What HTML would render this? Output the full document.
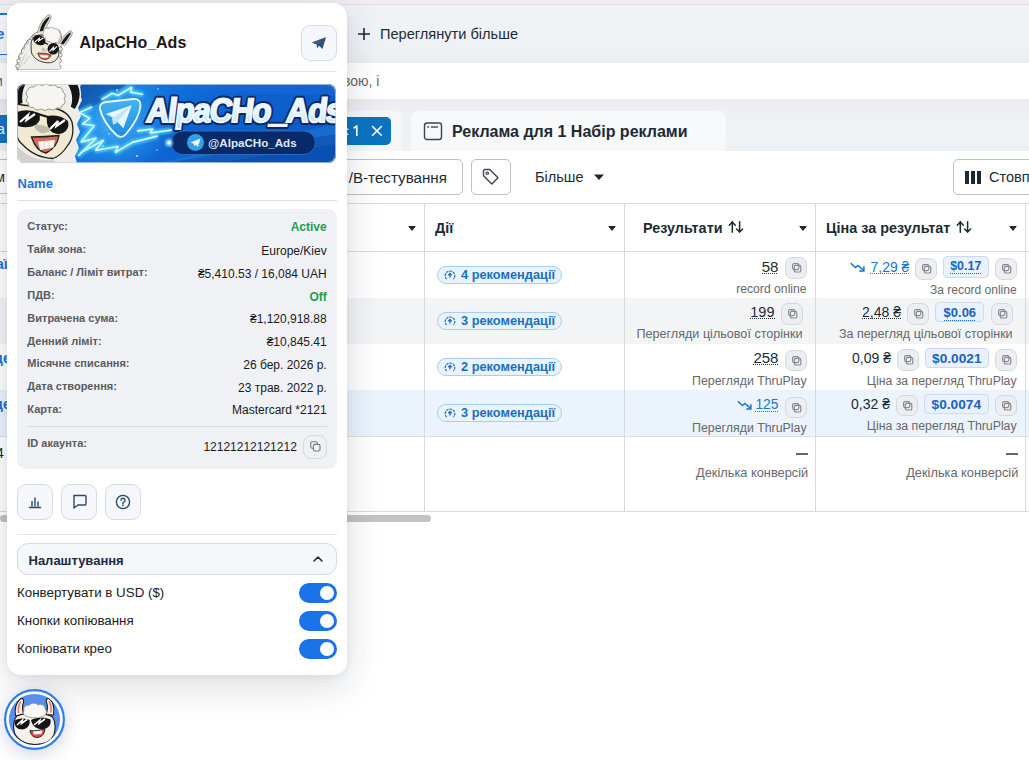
<!DOCTYPE html>
<html><head><meta charset="utf-8">
<style>
html,body{margin:0;padding:0;}
body{width:1029px;height:760px;overflow:hidden;position:relative;background:#fff;font-family:"Liberation Sans",sans-serif;color:#1c2b33;}
.a{position:absolute;}
.t{position:absolute;white-space:nowrap;line-height:1;}
.b{font-weight:700;}
.r{text-align:right;}
.cp{position:absolute;width:19.6px;height:19.6px;border:1px solid #d4d8de;border-radius:7px;background:#eceef2;box-sizing:content-box;}
.cp svg{position:absolute;left:6px;top:5px;}
.pill{position:absolute;height:16px;border:1px solid #a9cdf0;border-radius:9px;background:#e9f3fc;}
.usd{position:absolute;border:1px solid #c9dcf3;border-radius:4px;background:#e8f1fc;}
.sub{color:#65686c;}
.lnk{color:#1877c9;}
.dot{background-image:linear-gradient(to right,currentColor 50%,transparent 50%);background-size:2px 1px;background-repeat:repeat-x;background-position:0 100%;}
</style></head><body>

<!-- ===== PAGE BACKGROUND ===== -->
<div class="a" style="left:0;top:0;width:1029px;height:4px;background:#f1ecf2"></div>
<div class="a" style="left:0;top:4px;width:1029px;height:59px;background:linear-gradient(#eff2f5 0,#eff2f5 75%,#ecedf2 100%)"></div>
<div class="a" style="left:0;top:4px;width:1029px;height:1px;background:#e0e1e6"></div>
<svg class="a" style="left:357px;top:27px" width="14" height="14" viewBox="0 0 14 14"><path d="M7 1V13M1 7H13" stroke="#1c2b33" stroke-width="1.6"/></svg>
<div class="t" style="left:380px;top:27px;font-size:14.6px;color:#1c2b33">Переглянути більше</div>
<div class="a" style="left:0;top:63px;width:1029px;height:36px;background:#fff"></div>
<div class="t" style="left:343px;top:74px;font-size:14px;color:#65686c">вою, і</div>

<div class="a" style="left:0;top:99px;width:1029px;height:52px;background:linear-gradient(#eaebf0 0,#eef1f4 14px,#eff2f5 100%)"></div>
<div class="a" style="left:300px;top:111px;width:102px;height:40px;background:#f5f6f8;border-radius:8px 8px 0 0"></div>
<div class="a" style="left:300px;top:117px;width:91px;height:28px;background:#0b74c0;border-radius:5px"></div>
<svg class="a" style="left:346px;top:124px" width="40" height="14" viewBox="0 0 40 14"><path d="M1.6 4.5v1.6M1.6 9.5v1.6" stroke="#fff" stroke-width="1.6"/><path d="M7.6 4.2L10.8 2V12" fill="none" stroke="#fff" stroke-width="1.7" stroke-linejoin="round"/><path d="M26.6 2.6L35.3 11.3M35.3 2.6L26.6 11.3" stroke="#fff" stroke-width="1.5" stroke-linecap="round"/></svg>

<div class="a" style="left:411px;top:111px;width:315px;height:40px;background:#f7f8fa;border-radius:8px 8px 0 0"></div>
<svg class="a" style="left:423px;top:121px" width="20" height="20" viewBox="0 0 20 20"><rect x="1.5" y="2" width="17" height="16.5" rx="2.5" fill="none" stroke="#3c4650" stroke-width="1.4"/><line x1="5" y1="6" x2="5.6" y2="6" stroke="#3c4650" stroke-width="1.6" stroke-linecap="round"/><line x1="8" y1="6" x2="15" y2="6" stroke="#3c4650" stroke-width="1.4"/></svg>
<div class="t b" style="left:452px;top:124px;font-size:16px;color:#1c2b33">Реклама для 1 Набір реклами</div>

<!-- toolbar -->
<div class="a" style="left:0;top:151px;width:1029px;height:52px;background:#fff"></div>
<div class="a" style="left:280px;top:159px;width:181px;height:34px;border:1px solid #b8c2cc;border-radius:5px;background:#fff"></div>
<div class="t" style="left:348.7px;top:170px;font-size:15.2px;color:#1c2b33">/В-тестування</div>
<div class="a" style="left:471px;top:159px;width:38px;height:34px;border:1px solid #b8c2cc;border-radius:5px;background:#fff"></div>
<svg class="a" style="left:481px;top:167px" width="20" height="20" viewBox="0 0 20 20"><path d="M2.5 3.5v5.2l8.3 8.3 6.2-6.2-8.3-8.3H3.5z" fill="none" stroke="#3c4650" stroke-width="1.4" stroke-linejoin="round"/><circle cx="6.3" cy="6.3" r="1.2" fill="none" stroke="#3c4650" stroke-width="1.2"/></svg>
<div class="t" style="left:535px;top:170px;font-size:14.5px;color:#1c2b33">Більше</div>
<svg class="a" style="left:593px;top:173px" width="12" height="8" viewBox="0 0 12 8"><path d="M1 1.5h10L6 7z" fill="#1c2b33"/></svg>
<div class="a" style="left:953px;top:159px;width:90px;height:34px;border:1px solid #b8c2cc;border-radius:5px;background:#fff"></div>
<svg class="a" style="left:965px;top:171px" width="17" height="13" viewBox="0 0 17 13"><rect x="0" y="0" width="4" height="13" fill="#1c2b33"/><rect x="6" y="0" width="4" height="13" fill="#1c2b33"/><rect x="12" y="0" width="4" height="13" fill="#1c2b33"/></svg>
<div class="t" style="left:989px;top:170px;font-size:14.5px;color:#1c2b33">Стовпці</div>

<!-- table -->
<div class="a" style="left:0;top:203px;width:1029px;height:1px;background:#d8d9db"></div>
<div class="a" style="left:0;top:251px;width:1029px;height:1px;background:#d8d9db"></div>
<div class="a" style="left:0;top:298px;width:1029px;height:46px;background:#f3f4f6"></div>
<div class="a" style="left:0;top:390px;width:1029px;height:46px;background:#ebf3fd"></div>
<div class="a" style="left:0;top:436px;width:1029px;height:1px;background:#dddee0"></div>
<div class="a" style="left:0;top:511px;width:1029px;height:1px;background:#d8d9db"></div>
<div class="a" style="left:424px;top:203px;width:1px;height:308px;background:#d8d9db"></div>
<div class="a" style="left:624px;top:203px;width:1px;height:308px;background:#d8d9db"></div>
<div class="a" style="left:815px;top:203px;width:1px;height:308px;background:#d8d9db"></div>
<div class="a" style="left:1025px;top:203px;width:1px;height:308px;background:#d8d9db"></div>
<div class="a" style="left:0;top:515px;width:431px;height:7px;background:#c3c3c3;border-radius:4px"></div>

<!-- header -->
<svg class="a" style="left:408px;top:226px" width="8" height="5" viewBox="0 0 8 5"><path d="M0.8 0.5h6.4L4 4.4z" fill="#1c2b33" stroke="#1c2b33" stroke-width="1" stroke-linejoin="round"/></svg>
<div class="t b" style="left:435px;top:221px;font-size:14.4px">Дії</div>
<svg class="a" style="left:608px;top:226px" width="8" height="5" viewBox="0 0 8 5"><path d="M0.8 0.5h6.4L4 4.4z" fill="#1c2b33" stroke="#1c2b33" stroke-width="1" stroke-linejoin="round"/></svg>
<div class="t b" style="left:643px;top:221px;font-size:14.4px">Результати</div>
<svg class="a" style="left:728px;top:220px" width="16" height="14" viewBox="0 0 16 14"><path d="M4.3 1.6V12.2M1.3 5.2L4.3 2 7.3 5.2M11.6 1.8V12.3M8.6 9L11.6 12.1 14.6 9" fill="none" stroke="#1c2b33" stroke-width="1.5" stroke-linecap="round" stroke-linejoin="round"/></svg>
<svg class="a" style="left:799px;top:226px" width="8" height="5" viewBox="0 0 8 5"><path d="M0.8 0.5h6.4L4 4.4z" fill="#1c2b33" stroke="#1c2b33" stroke-width="1" stroke-linejoin="round"/></svg>
<div class="t b" style="left:826px;top:221px;font-size:14.4px">Ціна за результат</div>
<svg class="a" style="left:955.5px;top:220px" width="16" height="14" viewBox="0 0 16 14"><path d="M4.3 1.6V12.2M1.3 5.2L4.3 2 7.3 5.2M11.6 1.8V12.3M8.6 9L11.6 12.1 14.6 9" fill="none" stroke="#1c2b33" stroke-width="1.5" stroke-linecap="round" stroke-linejoin="round"/></svg>
<svg class="a" style="left:1009px;top:226px" width="8" height="5" viewBox="0 0 8 5"><path d="M0.8 0.5h6.4L4 4.4z" fill="#1c2b33" stroke="#1c2b33" stroke-width="1" stroke-linejoin="round"/></svg>

<!--STRIP-->
<div class="a" style="left:0;top:13px;width:7px;height:41px;background:#f7f8fa"></div>
<div class="a" style="left:0;top:13px;width:7px;height:1.5px;background:#1a73e8"></div>
<div class="a" style="left:0;top:53.5px;width:7px;height:1.5px;background:#1a73e8"></div>
<div class="t b" style="left:-4px;top:26px;font-size:15px;color:#1a6fd0">е</div>
<div class="t" style="left:-5px;top:74px;font-size:14px;color:#65686c">и</div>
<div class="a" style="left:0;top:115px;width:7px;height:28px;background:#1672c4"></div>
<div class="t" style="left:-3px;top:122px;font-size:14px;color:#fff">а</div>
<div class="a" style="left:0;top:159px;width:7px;height:1px;background:#b8c2cc"></div>
<div class="a" style="left:0;top:193px;width:7px;height:1px;background:#b8c2cc"></div>
<div class="t" style="left:-5px;top:170px;font-size:14.5px;color:#1c2b33">м</div>
<div class="t b" style="left:-4px;top:257px;font-size:14px;color:#1a6fd0">аї</div>
<div class="t b" style="left:-6px;top:351px;font-size:14px;color:#1a6fd0">де</div>
<div class="t b" style="left:-6px;top:397px;font-size:14px;color:#1a6fd0">де</div>
<div class="t" style="left:-4px;top:446px;font-size:14px;color:#1c2b33">4</div>
<!--/STRIP-->
<!--ROWS-->
<div class="pill" style="left:437px;top:266.0px;width:123px"><svg class="a" style="left:6px;top:3px" width="12" height="11" viewBox="0 0 12 11"><path d="M2.6 9.2A4.8 4.8 0 1 1 9.4 9.2" fill="none" stroke="#1d6fbe" stroke-width="1.2" stroke-dasharray="2.6 0.9"/><path d="M6 7.6V3.6M4.2 5.3L6 3.5 7.8 5.3" fill="none" stroke="#1d6fbe" stroke-width="1.3"/></svg><div class="t b" style="left:23px;top:1.6px;font-size:12.8px;color:#1b6fbf">4 рекомендації</div></div>
<div class="t dot" style="right:250.6px;top:258.6px;font-size:15px;color:#1c2b33">58</div>
<div class="cp" style="left:785.0px;top:257.0px"><svg width="10" height="10" viewBox="0 0 10 10"><rect x="0.6" y="0.6" width="6.2" height="6.0" rx="1.5" fill="none" stroke="#85898f" stroke-width="1.15"/><rect x="2.3" y="2.4" width="6.5" height="6.6" rx="1.6" fill="none" stroke="#85898f" stroke-width="1.15"/></svg></div>
<div class="t" style="right:222.4px;top:282.5px;font-size:12.2px;color:#65686c">record online</div>
<div class="t dot" style="right:119.6px;top:259.7px;font-size:14px;color:#1877c9">7,29 ₴</div>
<svg class="a" style="left:850px;top:262px" width="15" height="10" viewBox="0 0 15 10"><path d="M0.8 1.2l4.6 4.4 2.6-2.2 5.6 5" fill="none" stroke="#1877c9" stroke-width="1.5"/><path d="M9.2 8.9h4.7V4.2" fill="none" stroke="#1877c9" stroke-width="1.5"/></svg>
<div class="cp" style="left:915.0px;top:258.0px"><svg width="10" height="10" viewBox="0 0 10 10"><rect x="0.6" y="0.6" width="6.2" height="6.0" rx="1.5" fill="none" stroke="#85898f" stroke-width="1.15"/><rect x="2.3" y="2.4" width="6.5" height="6.6" rx="1.6" fill="none" stroke="#85898f" stroke-width="1.15"/></svg></div>
<div class="usd" style="left:943.0px;top:256.0px;width:43.6px;height:19.8px"></div>
<div class="t b" style="left:943.0px;width:45.6px;text-align:center;top:259.8px;font-size:12.5px;color:#1a62c5"><span class="dot" style="padding-bottom:1.5px">$0.17</span></div>
<div class="cp" style="left:995.0px;top:258.0px"><svg width="10" height="10" viewBox="0 0 10 10"><rect x="0.6" y="0.6" width="6.2" height="6.0" rx="1.5" fill="none" stroke="#85898f" stroke-width="1.15"/><rect x="2.3" y="2.4" width="6.5" height="6.6" rx="1.6" fill="none" stroke="#85898f" stroke-width="1.15"/></svg></div>
<div class="t" style="right:12.4px;top:283.5px;font-size:12.0px;color:#65686c">За record online</div>
<div class="pill" style="left:437px;top:312.3px;width:123px"><svg class="a" style="left:6px;top:3px" width="12" height="11" viewBox="0 0 12 11"><path d="M2.6 9.2A4.8 4.8 0 1 1 9.4 9.2" fill="none" stroke="#1d6fbe" stroke-width="1.2" stroke-dasharray="2.6 0.9"/><path d="M6 7.6V3.6M4.2 5.3L6 3.5 7.8 5.3" fill="none" stroke="#1d6fbe" stroke-width="1.3"/></svg><div class="t b" style="left:23px;top:1.6px;font-size:12.8px;color:#1b6fbf">3 рекомендації</div></div>
<div class="t dot" style="right:254.5px;top:304.6px;font-size:14.5px;color:#1c2b33">199</div>
<div class="cp" style="left:781.0px;top:303.0px"><svg width="10" height="10" viewBox="0 0 10 10"><rect x="0.6" y="0.6" width="6.2" height="6.0" rx="1.5" fill="none" stroke="#85898f" stroke-width="1.15"/><rect x="2.3" y="2.4" width="6.5" height="6.6" rx="1.6" fill="none" stroke="#85898f" stroke-width="1.15"/></svg></div>
<div class="t" style="right:226.4px;top:328.3px;font-size:12.6px;color:#65686c">Перегляди цільової сторінки</div>
<div class="t dot" style="right:128.0px;top:304.9px;font-size:14px;color:#1c2b33">2,48 ₴</div>
<div class="cp" style="left:907.3px;top:303.2px"><svg width="10" height="10" viewBox="0 0 10 10"><rect x="0.6" y="0.6" width="6.2" height="6.0" rx="1.5" fill="none" stroke="#85898f" stroke-width="1.15"/><rect x="2.3" y="2.4" width="6.5" height="6.6" rx="1.6" fill="none" stroke="#85898f" stroke-width="1.15"/></svg></div>
<div class="usd" style="left:935.2px;top:301.8px;width:47.3px;height:18.7px"></div>
<div class="t b" style="left:935.2px;width:49.3px;text-align:center;top:305.6px;font-size:13px;color:#1a62c5"><span class="dot" style="padding-bottom:1.5px">$0.06</span></div>
<div class="cp" style="left:991.2px;top:303.2px"><svg width="10" height="10" viewBox="0 0 10 10"><rect x="0.6" y="0.6" width="6.2" height="6.0" rx="1.5" fill="none" stroke="#85898f" stroke-width="1.15"/><rect x="2.3" y="2.4" width="6.5" height="6.6" rx="1.6" fill="none" stroke="#85898f" stroke-width="1.15"/></svg></div>
<div class="t" style="right:16.4px;top:328.3px;font-size:12.5px;color:#65686c">За перегляд цільової сторінки</div>
<div class="pill" style="left:437px;top:358.1px;width:123px"><svg class="a" style="left:6px;top:3px" width="12" height="11" viewBox="0 0 12 11"><path d="M2.6 9.2A4.8 4.8 0 1 1 9.4 9.2" fill="none" stroke="#1d6fbe" stroke-width="1.2" stroke-dasharray="2.6 0.9"/><path d="M6 7.6V3.6M4.2 5.3L6 3.5 7.8 5.3" fill="none" stroke="#1d6fbe" stroke-width="1.3"/></svg><div class="t b" style="left:23px;top:1.6px;font-size:12.8px;color:#1b6fbf">2 рекомендації</div></div>
<div class="t dot" style="right:250.6px;top:350.1px;font-size:15px;color:#1c2b33">258</div>
<div class="cp" style="left:785.0px;top:349.5px"><svg width="10" height="10" viewBox="0 0 10 10"><rect x="0.6" y="0.6" width="6.2" height="6.0" rx="1.5" fill="none" stroke="#85898f" stroke-width="1.15"/><rect x="2.3" y="2.4" width="6.5" height="6.6" rx="1.6" fill="none" stroke="#85898f" stroke-width="1.15"/></svg></div>
<div class="t" style="right:222.4px;top:375.0px;font-size:12.35px;color:#65686c">Перегляди ThruPlay</div>
<div class="t" style="right:138.0px;top:350.8px;font-size:14px;color:#1c2b33">0,09 ₴</div>
<div class="cp" style="left:897.2px;top:349.1px"><svg width="10" height="10" viewBox="0 0 10 10"><rect x="0.6" y="0.6" width="6.2" height="6.0" rx="1.5" fill="none" stroke="#85898f" stroke-width="1.15"/><rect x="2.3" y="2.4" width="6.5" height="6.6" rx="1.6" fill="none" stroke="#85898f" stroke-width="1.15"/></svg></div>
<div class="usd" style="left:925.0px;top:348.1px;width:61.6px;height:18.3px"></div>
<div class="t b" style="left:925.0px;width:63.6px;text-align:center;top:351.9px;font-size:13.7px;color:#1a62c5"><span class="" style="padding-bottom:1.5px">$0.0021</span></div>
<div class="cp" style="left:995.0px;top:349.1px"><svg width="10" height="10" viewBox="0 0 10 10"><rect x="0.6" y="0.6" width="6.2" height="6.0" rx="1.5" fill="none" stroke="#85898f" stroke-width="1.15"/><rect x="2.3" y="2.4" width="6.5" height="6.6" rx="1.6" fill="none" stroke="#85898f" stroke-width="1.15"/></svg></div>
<div class="t" style="right:12.4px;top:374.6px;font-size:12.3px;color:#65686c">Ціна за перегляд ThruPlay</div>
<div class="pill" style="left:437px;top:404.3px;width:123px"><svg class="a" style="left:6px;top:3px" width="12" height="11" viewBox="0 0 12 11"><path d="M2.6 9.2A4.8 4.8 0 1 1 9.4 9.2" fill="none" stroke="#1d6fbe" stroke-width="1.2" stroke-dasharray="2.6 0.9"/><path d="M6 7.6V3.6M4.2 5.3L6 3.5 7.8 5.3" fill="none" stroke="#1d6fbe" stroke-width="1.3"/></svg><div class="t b" style="left:23px;top:1.6px;font-size:12.8px;color:#1b6fbf">3 рекомендації</div></div>
<div class="t dot" style="right:250.6px;top:398.4px;font-size:13.8px;color:#1877c9">125</div>
<svg class="a" style="left:736.5px;top:400px" width="15" height="10" viewBox="0 0 15 10"><path d="M0.8 1.2l4.6 4.4 2.6-2.2 5.6 5" fill="none" stroke="#1877c9" stroke-width="1.5"/><path d="M9.2 8.9h4.7V4.2" fill="none" stroke="#1877c9" stroke-width="1.5"/></svg>
<div class="cp" style="left:785.0px;top:396.7px"><svg width="10" height="10" viewBox="0 0 10 10"><rect x="0.6" y="0.6" width="6.2" height="6.0" rx="1.5" fill="none" stroke="#85898f" stroke-width="1.15"/><rect x="2.3" y="2.4" width="6.5" height="6.6" rx="1.6" fill="none" stroke="#85898f" stroke-width="1.15"/></svg></div>
<div class="t" style="right:222.4px;top:422.0px;font-size:12.35px;color:#65686c">Перегляди ThruPlay</div>
<div class="t" style="right:139.0px;top:396.5px;font-size:14px;color:#1c2b33">0,32 ₴</div>
<div class="cp" style="left:896.2px;top:394.8px"><svg width="10" height="10" viewBox="0 0 10 10"><rect x="0.6" y="0.6" width="6.2" height="6.0" rx="1.5" fill="none" stroke="#85898f" stroke-width="1.15"/><rect x="2.3" y="2.4" width="6.5" height="6.6" rx="1.6" fill="none" stroke="#85898f" stroke-width="1.15"/></svg></div>
<div class="usd" style="left:924.0px;top:393.8px;width:62.6px;height:18.7px"></div>
<div class="t b" style="left:924.0px;width:64.6px;text-align:center;top:397.6px;font-size:13.7px;color:#1a62c5"><span class="" style="padding-bottom:1.5px">$0.0074</span></div>
<div class="cp" style="left:995.0px;top:394.8px"><svg width="10" height="10" viewBox="0 0 10 10"><rect x="0.6" y="0.6" width="6.2" height="6.0" rx="1.5" fill="none" stroke="#85898f" stroke-width="1.15"/><rect x="2.3" y="2.4" width="6.5" height="6.6" rx="1.6" fill="none" stroke="#85898f" stroke-width="1.15"/></svg></div>
<div class="t" style="right:12.4px;top:420.3px;font-size:12.3px;color:#65686c">Ціна за перегляд ThruPlay</div>
<div class="a" style="left:796px;top:453px;width:12.3px;height:1.6px;background:#65686c"></div>
<div class="t" style="right:220.8px;top:466.5px;font-size:12.8px;color:#65686c">Декілька конверсій</div>
<div class="a" style="left:1006px;top:453px;width:12.3px;height:1.6px;background:#65686c"></div>
<div class="t" style="right:10.7px;top:466.5px;font-size:12.8px;color:#65686c">Декілька конверсій</div>
<!--/ROWS-->

<!--PANEL-->
<!-- panel shadow & body -->
<div class="a" style="left:7px;top:3px;width:340px;height:672px;background:#fff;border-radius:14px;box-shadow:0 10px 36px rgba(20,30,50,0.16),0 2px 6px rgba(20,30,50,0.06)"></div>

<!-- header llama -->
<svg class="a" style="left:14px;top:12px" width="60" height="60" viewBox="0 0 60 60">
 <path d="M3 57.5 C2 53 4 50 5 47 C4 44 7 42 8 39 C8 36 11 34 12 31 C13 28 16 27 18 24 C20 21 24 20 27 18 L34 16 L45 18 C49 24 47.5 30 47 35 C48 40 45 44 46 48 C45 52 44 55 44 57.5 Z" fill="#efedea" stroke="#4a4844" stroke-width="0.6"/>
<circle cx="3.6" cy="54" r="2" fill="#efedea" stroke="#4a4844" stroke-width="0.5"/><circle cx="4.6" cy="49" r="2" fill="#efedea" stroke="#4a4844" stroke-width="0.5"/><circle cx="7" cy="44" r="2.2" fill="#efedea" stroke="#4a4844" stroke-width="0.5"/><circle cx="9.5" cy="39" r="2.2" fill="#efedea" stroke="#4a4844" stroke-width="0.5"/><circle cx="12.5" cy="34" r="2.2" fill="#efedea" stroke="#4a4844" stroke-width="0.5"/><circle cx="16" cy="29.5" r="2.2" fill="#efedea" stroke="#4a4844" stroke-width="0.5"/><circle cx="20" cy="25" r="2" fill="#efedea" stroke="#4a4844" stroke-width="0.5"/><circle cx="46.5" cy="37" r="2" fill="#efedea" stroke="#4a4844" stroke-width="0.5"/><circle cx="46" cy="43" r="2" fill="#efedea" stroke="#4a4844" stroke-width="0.5"/><circle cx="45.5" cy="49" r="2" fill="#efedea" stroke="#4a4844" stroke-width="0.5"/><circle cx="45" cy="55" r="2" fill="#efedea" stroke="#4a4844" stroke-width="0.5"/><path d="M5 57.5 L7 44 L13 33 L21 24 L30 18 L45 18 L45.5 57.5Z" fill="#efedea"/>
 <path d="M6 55 C9 50 8 46 12 42 M10 52 C12 49 13 46 16 44" fill="none" stroke="#b5b2ac" stroke-width="0.6"/>
 <path d="M24.5 20.5 C26 13 30 6.5 34.5 4 C36.5 3.5 36.8 5.5 35.5 7.5 C33 11 31 15 29.5 19.5 Z" fill="#1a1a1a" stroke="#dcd8d0" stroke-width="1.6" stroke-linejoin="round"/>
 <path d="M23.3 21 C25 13 29.5 5.5 34.5 3 C37.8 2.5 37.5 6 36.3 8 C34 11.5 32 15.5 30.5 20.5" fill="none" stroke="#4a4844" stroke-width="0.5"/>
 <path d="M45.5 32 C48.5 27 52 22.5 55.5 20 C57.5 19.2 57.8 21 56.8 23 C54.5 27 52 30.5 49.5 33.5 Z" fill="#1a1a1a" stroke="#dcd8d0" stroke-width="1.5" stroke-linejoin="round"/>
 <path d="M44.3 32.2 C47.5 26.5 51.5 21.5 55.5 19 C58.8 18.2 58.8 21.5 57.6 23.5 C55 28 52.5 31.5 50.3 34.3" fill="none" stroke="#4a4844" stroke-width="0.5"/>
 <path d="M17 31 C18 25 23 22 29 23 C37 24.5 44 31 44.8 39 C45.5 46 41 51 34 50.8 C26 50.5 19 46.5 17.3 40 Z" fill="#f1ecd8" stroke="#2a2a2a" stroke-width="0.9"/>
 <path d="M30 20 C29 17 32 15.5 34.5 16.5 C36 14.5 39.5 15 40.5 17 C43 16 46 18 45.5 20.5 C47.5 22 47 25.5 45 26.5 C46 29 44 31.5 41.5 30.5 C40 32 36.5 31.5 36 29.5 C33 30 31 28 31.5 26 C29 25 28.5 21.5 30 20Z" fill="#f7f6f3" stroke="#7d7a74" stroke-width="0.6"/>
 <ellipse cx="25.3" cy="28.2" rx="6.4" ry="4.8" transform="rotate(25 25.3 28.2)" fill="#141414"/>
 <ellipse cx="39.2" cy="36.8" rx="5.6" ry="5.8" transform="rotate(25 39.2 36.8)" fill="#141414"/>
 <path d="M30.5 30.5 L34 32.5" stroke="#141414" stroke-width="1.4"/>
 <path d="M21 30 L25.5 26.2 L24.8 29 L29.5 25.8" fill="none" stroke="#fff" stroke-width="1.1"/>
 <path d="M35.5 39.5 L39.5 35.3 L39 38.2 L43 34.5" fill="none" stroke="#fff" stroke-width="1.1"/>
 <path d="M28 35 C30 36 32 37.5 33 39 C31 40 28.5 39.5 27.5 38 Z" fill="#c9c3b2"/>
 <path d="M23.8 41 C27 41.5 32 40.5 37 43 C36 46.5 33 47.8 29.5 47.3 C26 46.8 24.3 44 23.8 41Z" fill="#d66a5e" stroke="#2a2a2a" stroke-width="0.8"/>
 <path d="M26 43 L34.5 43.5 L33.5 45.8 L27 45.5Z" fill="#fbf8f0"/>
</svg>
<div class="t b" style="left:79.6px;top:35px;font-size:16px;color:#1a1a1a">AlpaCHo_Ads</div>
<div class="a" style="left:301px;top:25px;width:34px;height:34px;border:1px solid #d3dbe6;border-radius:9px;background:#f5f7fb"></div>
<svg class="a" style="left:311px;top:36px" width="16" height="14" viewBox="0 0 16 14"><path d="M1 6.5 L15 1.2 L11.5 13 L8 9.8 L6 12.2 L5.7 8.6 Z" fill="#34507a"/><path d="M1 6.5 L15 1.2 L5.7 8.6 Z" fill="#3d5a85"/></svg>
<div class="a" style="left:17px;top:71px;width:320px;height:1px;background:#e3e7ed"></div>

<!-- banner -->
<svg class="a" style="left:17px;top:84px" width="319" height="79" viewBox="0 0 319 79">
 <defs>
  <linearGradient id="bg1" x1="0" y1="0" x2="1" y2="0.3">
   <stop offset="0" stop-color="#0a4ab5"/><stop offset="0.35" stop-color="#137be3"/><stop offset="0.6" stop-color="#0e66d2"/><stop offset="1" stop-color="#0b5bc8"/>
  </linearGradient>
  <radialGradient id="glow" cx="100" cy="38" r="55" gradientUnits="userSpaceOnUse"><stop offset="0" stop-color="#5fd0ff" stop-opacity="0.75"/><stop offset="0.6" stop-color="#3aa8f5" stop-opacity="0.35"/><stop offset="1" stop-color="#3aa8f5" stop-opacity="0"/></radialGradient>
  <linearGradient id="txt" x1="0" y1="0" x2="0" y2="1"><stop offset="0" stop-color="#ffffff"/><stop offset="0.55" stop-color="#e6f4ff"/><stop offset="1" stop-color="#a9d8fb"/></linearGradient>
  <clipPath id="bc"><rect x="0" y="0" width="319" height="79" rx="8"/></clipPath>
  <filter id="blr" x="-20%" y="-20%" width="140%" height="140%"><feGaussianBlur stdDeviation="1.6"/></filter>
 </defs>
 <g clip-path="url(#bc)">
 <rect width="319" height="79" fill="url(#bg1)"/>
 <path d="M140 79 L319 40 L319 60 L200 79Z" fill="#2a8ae8" opacity="0.35"/>
 <path d="M120 0 L319 0 L319 12 L200 8Z" fill="#1a6ad8" opacity="0.5"/>
 <rect width="319" height="79" fill="url(#glow)"/>
 <!-- lightning glow -->
 <path d="M60 0 L110 0 L80 20 L60 30Z" fill="#083a8c" opacity="0.45"/>
 <path d="M150 79 L319 50 L319 79Z" fill="#083a8c" opacity="0.35"/>
 <g fill="none" stroke="#55dcff" stroke-width="5" stroke-linejoin="bevel" filter="url(#blr)" opacity="0.85">
  <path d="M84.6 15.6 L95 9.4 L101.2 11.4 L114.7 3.1 L113.7 8.3 L126.2 10.4"/>
  <path d="M75.2 22.9 L62.2 28.6 L73.1 34.3 L65.3 40 L77.3 41.6 L63.8 58.2 L79.4 54 L61 72"/>
  <path d="M63.8 68.6 L86.7 56.1 L78.3 66.5 L101.2 62.4 L98.1 68.6 L115.8 58.2 L140.7 52"/>
  <path d="M120 47 L136 45 L133 49 L155 46"/>
 </g>
 <g fill="none" stroke="#e6fcff" stroke-width="1.4" stroke-linejoin="bevel">
  <path d="M84.6 15.6 L95 9.4 L101.2 11.4 L114.7 3.1 L113.7 8.3 L126.2 10.4"/>
  <path d="M75.2 22.9 L62.2 28.6 L73.1 34.3 L65.3 40 L77.3 41.6 L63.8 58.2 L79.4 54 L61 72"/>
  <path d="M63.8 68.6 L86.7 56.1 L78.3 66.5 L101.2 62.4 L98.1 68.6 L115.8 58.2 L140.7 52"/>
  <path d="M120 47 L136 45 L133 49 L155 46"/>
 </g>
 <g fill="#bff0ff"><circle cx="100" cy="6" r="0.9"/><circle cx="141" cy="5" r="0.8"/><circle cx="86" cy="62" r="0.8"/><circle cx="120" cy="72" r="0.9"/><circle cx="140" cy="66" r="0.7"/><circle cx="72" cy="58" r="0.7"/><circle cx="92" cy="50" r="0.7"/></g>
 <!-- shield -->
 <defs><linearGradient id="shg" x1="0" y1="0" x2="0" y2="1"><stop offset="0" stop-color="#45b4f2"/><stop offset="1" stop-color="#1f8be2"/></linearGradient></defs>
 <path d="M83 25 Q82 19 89 18 L116 15 Q124 14.5 123.5 22 Q122.5 34 109 50 Q104 55.5 99 50.5 Q86 38 83 25Z" fill="url(#shg)" stroke="#eefaff" stroke-width="1.8"/>
 <path d="M88.7 30 L114.7 21.3 L106.4 44.2 L97 34.3 Z" fill="#e8f6ff"/>
 <path d="M95 34 L96 40.5 L99 39.5 L114.7 21.3Z" fill="#c4e4f8"/>
 <!-- llama wool -->
 <path d="M0 0 L64 0 L62 8 L65 16 L61 24 L64 32 L60 40 L63 48 L59 56 L62 64 L58 72 L60 79 L0 79Z" fill="#efede8"/>
 <path d="M0 62 Q14 78 36 76 L40 79 L0 79Z" fill="#d3d1cc"/>
 <!-- ears -->
 <path d="M50 0 L61 0 Q67 12 58 26 L53 23 Q57 12 50 0Z" fill="#151515" stroke="#f4f2ec" stroke-width="1.4"/>
 <path d="M0 0 L8.5 0 Q4 9 5.5 19 L0 21Z" fill="#151515"/>
 <!-- face -->
 <path d="M0 20 Q10 22 28 23 Q50 24 55 38 Q58 52 51 61 Q44 72 36 74.5 Q18 74 5 60 Q0 56 0 50Z" fill="#f1ead2" stroke="#222" stroke-width="1.3"/>
 <!-- hair -->
 <path d="M11 13 Q7 9 11 6 Q12 2 17 3 Q20 -1 25 1.5 Q29 -1.5 33 1.5 Q38 -0.5 41 3.5 Q46 3 46 8 Q50 11 47 15 Q50 19 45.5 21 Q45 25 40 24 Q37 27.5 32 25 Q28 28 24 25 Q19 27.5 16.5 23.5 Q11 24 11.5 19.5 Q7 17 11 13Z" fill="#f6f5f2" stroke="#8e8a83" stroke-width="0.9"/>
 <!-- glasses -->
 <path d="M0 28 Q10 24 22 29 Q25 36 19 41 Q10 45 1 42Z" fill="#161616"/>
 <path d="M30 32 Q42 30 51 37 Q53 45 46 49 Q37 52 32 45 Q29 39 30 32Z" fill="#161616"/>
 <path d="M21 30 L31 33" stroke="#161616" stroke-width="2.2"/>
 <path d="M3 38 L11 31 L9.5 36 L18 30" fill="none" stroke="#fff" stroke-width="2.2"/>
 <path d="M33 45 L41 37 L39.5 42 L48 36" fill="none" stroke="#fff" stroke-width="2.2"/>
 <!-- nose -->
 <path d="M17 41 Q26 40 34 45 Q31 50 24 49 Q18 47 17 41Z" fill="#c2bcab"/>
 <!-- mouth -->
 <path d="M14.5 53 Q28 53 42 51.5 Q40 64 29 69 Q19 67 14.5 53Z" fill="#d8685a" stroke="#222" stroke-width="1.4"/>
 <path d="M21 57.5 L38 56 L36.5 63.5 L23 66Z" fill="#fbf7ee"/>
 <path d="M27 57 L27.5 65 M32 56.5 L32 64" stroke="#d9d2c2" stroke-width="0.8"/>
 <!-- title -->
 <text x="0" y="0" transform="translate(128.5 38) skewX(-7) scale(0.93 1)" font-family="Liberation Sans" font-weight="700" font-size="33.7" letter-spacing="-1.3" fill="#0a2868" stroke="#0a2868" stroke-width="6" stroke-linejoin="round">AlpaCHo_Ads</text>
 <text x="0" y="0" transform="translate(128.5 38) skewX(-7) scale(0.93 1)" font-family="Liberation Sans" font-weight="700" font-size="33.7" letter-spacing="-1.3" fill="url(#txt)" stroke="#eaf6ff" stroke-width="2">AlpaCHo_Ads</text>
 <!-- pill -->
 <rect x="154" y="47" width="144.4" height="23.5" rx="11.75" fill="#082a6a" stroke="#2a6cc0" stroke-width="1"/>
 <circle cx="152" cy="58.7" r="3.5" fill="#9ff0ff" filter="url(#blr)"/>
 <circle cx="152" cy="58.7" r="1.6" fill="#ffffff"/>
 <circle cx="178.5" cy="58.6" r="8.5" fill="#34a0ea"/>
 <path d="M173.5 58.5 L183.5 54.5 L181 63 L178.5 60.8 L177 62.5 L176.8 59.8Z" fill="#eaf7ff"/>
 <text x="191" y="63" font-family="Liberation Sans" font-weight="700" font-size="11.6" fill="#dfe8f2">@AlpaCHo_Ads</text>
 </g>
 <rect x="0.5" y="0.5" width="318" height="78" rx="8" fill="none" stroke="#cdd6e4" stroke-width="1" opacity="0.7"/>
</svg>

<div class="t b" style="left:17.5px;top:177.3px;font-size:13px;color:#1a73e8">Name</div>
<div class="a" style="left:17px;top:200px;width:320px;height:1px;background:#dde3ec"></div>

<!-- info card -->
<div class="a" style="left:17px;top:209px;width:320px;height:259.6px;background:#f0f1f5;border-radius:9px"></div>
<!--INFO-->
<div class="t b" style="left:27.3px;top:221.07px;font-size:11px;color:#595b60">Статус:</div>
<div class="t b" style="right:702.3px;top:221.44px;font-size:12px;color:#1e9e4f">Active</div>
<div class="t b" style="left:27.3px;top:244.47px;font-size:11px;color:#595b60">Тайм зона:</div>
<div class="t" style="right:702.3px;top:244.84px;font-size:12px;color:#1a1a1a">Europe/Kiev</div>
<div class="t b" style="left:27.3px;top:267.27px;font-size:11px;color:#595b60">Баланс / Ліміт витрат:</div>
<div class="t" style="right:702.3px;top:267.64px;font-size:12px;color:#1a1a1a">₴5,410.53 / 16,084 UAH</div>
<div class="t b" style="left:27.3px;top:290.17px;font-size:11px;color:#595b60">ПДВ:</div>
<div class="t b" style="right:702.3px;top:290.54px;font-size:12px;color:#1e9e4f">Off</div>
<div class="t b" style="left:27.3px;top:313.07px;font-size:11px;color:#595b60">Витрачена сума:</div>
<div class="t" style="right:702.3px;top:313.44px;font-size:12px;color:#1a1a1a">₴1,120,918.88</div>
<div class="t b" style="left:27.3px;top:335.97px;font-size:11px;color:#595b60">Денний ліміт:</div>
<div class="t" style="right:702.3px;top:336.34px;font-size:12px;color:#1a1a1a">₴10,845.41</div>
<div class="t b" style="left:27.3px;top:358.27px;font-size:11px;color:#595b60">Місячне списання:</div>
<div class="t" style="right:702.3px;top:358.64px;font-size:12px;color:#1a1a1a">26 бер. 2026 р.</div>
<div class="t b" style="left:27.3px;top:381.17px;font-size:11px;color:#595b60">Дата створення:</div>
<div class="t" style="right:702.3px;top:381.54px;font-size:12px;color:#1a1a1a">23 трав. 2022 р.</div>
<div class="t b" style="left:27.3px;top:403.87px;font-size:11px;color:#595b60">Карта:</div>
<div class="t" style="right:702.3px;top:404.24px;font-size:12px;color:#1a1a1a">Mastercard *2121</div>
<div class="a" style="left:27px;top:426px;width:300px;height:1px;background:#d9dbe0"></div>
<div class="t b" style="left:27.3px;top:438.3px;font-size:11px;color:#595b60">ID акаунта:</div>
<div class="t" style="right:732.2px;top:441.3px;font-size:12px;color:#1a1a1a">12121212121212</div>
<div class="a" style="left:303px;top:435px;width:22px;height:21.5px;border:1px solid #d6d9de;border-radius:8px;background:#eff0f4"></div>
<svg class="a" style="left:309.5px;top:441px" width="11" height="11" viewBox="0 0 11 11"><rect x="0.7" y="0.7" width="6.6" height="6.6" rx="1.6" fill="none" stroke="#74787d" stroke-width="1.1"/><rect x="3.4" y="3.4" width="6.6" height="6.6" rx="1.6" fill="#eff0f4" stroke="#74787d" stroke-width="1.1"/></svg>
<!--/INFO-->

<!-- action buttons -->
<div class="a" style="left:17px;top:484px;width:34px;height:34px;border:1px solid #d3dbe6;border-radius:9px;background:#f5f7fb"></div>
<div class="a" style="left:61px;top:484px;width:34px;height:34px;border:1px solid #d3dbe6;border-radius:9px;background:#f5f7fb"></div>
<div class="a" style="left:105px;top:484px;width:34px;height:34px;border:1px solid #d3dbe6;border-radius:9px;background:#f5f7fb"></div>
<svg class="a" style="left:27px;top:494px" width="16" height="16" viewBox="0 0 16 16"><path d="M2.5 13.5h11M5 12V7.5M8 12V4M11 12V8" stroke="#2c4a6e" stroke-width="1.4" fill="none" stroke-linecap="round"/></svg>
<svg class="a" style="left:71px;top:493px" width="17" height="17" viewBox="0 0 17 17"><path d="M3 2.5h11a1 1 0 0 1 1 1v7.5a1 1 0 0 1-1 1H7L3 15V3.5a1 1 0 0 1 0-1z" fill="none" stroke="#2c4a6e" stroke-width="1.4" stroke-linejoin="round"/></svg>
<svg class="a" style="left:114px;top:493px" width="18" height="18" viewBox="0 0 18 18"><circle cx="9" cy="9" r="6.6" fill="none" stroke="#2c4a6e" stroke-width="1.4"/><path d="M7 7.2a2 2 0 1 1 2.6 1.9c-.5.2-.6.5-.6 1v.6" fill="none" stroke="#2c4a6e" stroke-width="1.4" stroke-linecap="round"/><circle cx="9" cy="12.4" r="0.85" fill="#2c4a6e"/></svg>
<div class="a" style="left:17px;top:534px;width:320px;height:1px;background:#e3e7ed"></div>

<!-- settings -->
<div class="a" style="left:17px;top:543px;width:318px;height:30px;border:1px solid #d3dbe6;border-radius:11px;background:#f5f7fb"></div>
<div class="t b" style="left:28.5px;top:553.6px;font-size:13px;color:#1c2b45">Налаштування</div>
<svg class="a" style="left:312px;top:553px" width="12" height="10" viewBox="0 0 12 10"><path d="M2 8 L6 4 L10 8" fill="none" stroke="#1c2b45" stroke-width="1.6" stroke-linecap="round" stroke-linejoin="round"/></svg>
<div class="t" style="left:17px;top:585.8px;font-size:13.35px;color:#1a1a1a">Конвертувати в USD ($)</div>
<div class="t" style="left:17px;top:613.8px;font-size:13.35px;color:#1a1a1a">Кнопки копіювання</div>
<div class="t" style="left:17px;top:641.8px;font-size:13.35px;color:#1a1a1a">Копіювати крео</div>
<div class="a" style="left:299px;top:583px;width:38px;height:20px;border-radius:10px;background:#1a73e8"></div>
<div class="a" style="left:320px;top:586px;width:14px;height:14px;border-radius:7px;background:#fff"></div>
<div class="a" style="left:299px;top:611px;width:38px;height:20px;border-radius:10px;background:#1a73e8"></div>
<div class="a" style="left:320px;top:614px;width:14px;height:14px;border-radius:7px;background:#fff"></div>
<div class="a" style="left:299px;top:639px;width:38px;height:20px;border-radius:10px;background:#1a73e8"></div>
<div class="a" style="left:320px;top:642px;width:14px;height:14px;border-radius:7px;background:#fff"></div>

<!-- avatar -->
<div class="a" style="left:4px;top:689px;width:61px;height:61px;border-radius:50%;box-shadow:0 4px 18px rgba(30,60,120,0.22)"></div>
<svg class="a" style="left:4px;top:689px" width="61" height="61" viewBox="0 0 61 61">
 <defs><clipPath id="avc"><circle cx="30.5" cy="30.5" r="25.6"/></clipPath></defs>
 <circle cx="30.5" cy="30.5" r="29.4" fill="#fff" stroke="#2b7de9" stroke-width="2.2"/>
 <circle cx="30.5" cy="30.5" r="25.6" fill="#5a90ec"/>
 <g clip-path="url(#avc)">
  <path d="M11.5 27 C10.5 20 12 13.5 16.5 9.5 C19.5 8.8 20 11.5 19.5 13.5 C18 17 18.5 22 20 26Z" fill="#f3efe6" stroke="#1c1c1c" stroke-width="1.1"/>
  <path d="M14.5 24 C14 19 15 15 17 12.5" fill="none" stroke="#e57a68" stroke-width="1.6"/>
  <path d="M49.5 26 C50.5 19.5 49.5 13 45 9.5 C42 8.8 42 11.5 42.5 13.5 C44 17 43.5 21.5 42 25.5Z" fill="#f3efe6" stroke="#1c1c1c" stroke-width="1.1"/>
  <path d="M47 23.5 C47.5 19 46.8 15 45 12.5" fill="none" stroke="#e57a68" stroke-width="1.6"/>
  <path d="M10.5 44 C9 38 9.5 31 13 27 C18 24 24 25 30.5 25 C38 25 44 24.5 48.5 28 C52 33 51.5 40 50 46 C47 52 40 55.5 31 55.5 C22 55.5 13.5 51 10.5 44Z" fill="#f4f1e8" stroke="#1c1c1c" stroke-width="1.1"/>
  <path d="M20 22 C19 18 22 15.5 25 16.5 C27 13.5 32 13.5 34 16 C37 14.5 41.5 16.5 41 20 C43.5 22 42.5 26.5 39.5 27 C36 29.5 26 29.5 22.5 27 C19.5 26.5 18.5 24 20 22Z" fill="#f8f7f3" stroke="#8a877f" stroke-width="0.7"/>
  <path d="M10.5 32 C13 29 20 28.5 25.5 31 C26.5 35 24 40 18.5 40.5 C13 40.5 10 37 10.5 32Z" fill="#151515"/>
  <path d="M27 31 C32 28.5 41 28 46.5 30.5 C47.5 35 45 39.5 39 40 C33 40.5 28 37 27 31Z" fill="#151515"/>
  <path d="M13 36 L18.5 31 L17.5 34.5 L23 30.5" fill="none" stroke="#fff" stroke-width="1.6"/>
  <path d="M30 36 L36 31 L35 34.5 L41 30" fill="none" stroke="#fff" stroke-width="1.6"/>
  <path d="M26 41.5 C30 42.5 36 41 41 40 C40.5 45.5 37 48.5 33 48.5 C29 48.5 26.5 45.5 26 41.5Z" fill="#df4a4a" stroke="#1c1c1c" stroke-width="0.9"/>
  <path d="M29 42.5 L38.5 41.5 L37.5 45 L30 45.5Z" fill="#fff"/>
 </g>
</svg>

<!--/PANEL-->

</body></html>
